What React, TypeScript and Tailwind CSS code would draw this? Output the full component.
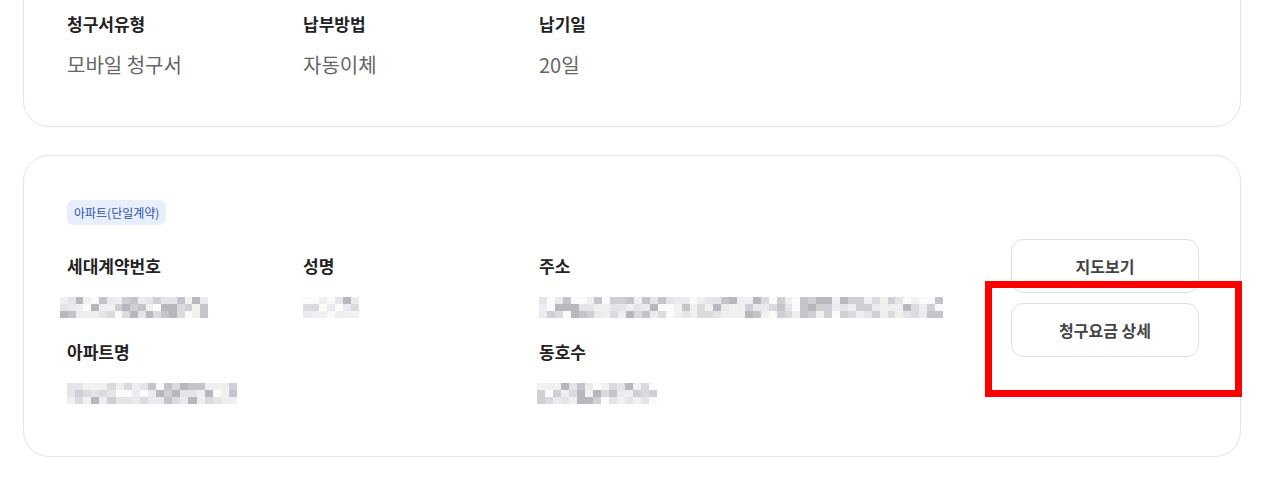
import React from "react";

type Field = {
  label: string;
  value?: string;
};

const shades = ["#efeff1", "#e4e5e8", "#dadbdf", "#cfd0d4", "#c3c5ca", "#e9ebef", "#b6b8bd", "#f3f1f0", "#fbfbfc"];

// pixelated placeholder for masked values
function Mosaic({ width, seed }: { width: number; seed: number }) {
  const cols = Math.round(width / 8);
  const rows = 3;
  const cells: string[] = [];
  for (let i = 0; i < cols * rows; i++) {
    const h = Math.abs(Math.sin((i + 1) * 12.9898 + seed * 78.233) * 43758.5453);
    const idx = Math.floor((h - Math.floor(h)) * shades.length);
    cells.push(shades[idx]);
  }
  return (
    <div
      className="grid h-[21px]"
      style={{ width, gridTemplateColumns: `repeat(${cols}, 1fr)` }}
    >
      {cells.map((c, i) => (
        <div key={i} style={{ backgroundColor: c }} />
      ))}
    </div>
  );
}

function Label({ children }: { children: React.ReactNode }) {
  return <div className="text-[17px] leading-[24px] font-bold text-[#222]">{children}</div>;
}

export default function App() {
  const billing: Field[] = [
    { label: "청구서유형", value: "모바일 청구서" },
    { label: "납부방법", value: "자동이체" },
    { label: "납기일", value: "20일" },
  ];

  return (
    <div
      className="relative min-h-[496px] overflow-hidden bg-white pl-[23px] pr-[30px]"
      style={{ fontFamily: '"Noto Sans CJK KR", "Noto Sans", sans-serif' }}
    >
      {/* billing card (top is cut off) */}
      <div className="-mt-[33px] rounded-[26px] border border-[#e3e5e8] pl-[43px] pr-[42px] pt-[44px] pb-[48px]">
        <div className="grid grid-cols-[236px_236px_1fr]">
          {billing.map((f) => (
            <div key={f.label}>
              <Label>{f.label}</Label>
              <div className="mt-[15px] text-[20px] leading-[27px] text-[#666]">{f.value}</div>
            </div>
          ))}
        </div>
      </div>

      {/* contract card */}
      <div className="mt-[28px] flex rounded-[26px] border border-[#e3e5e8] pl-[43px] pr-[41px] pt-[43px] pb-[52px]">
        <div className="flex-1">
          <span className="inline-block rounded-[6px] bg-[#e8effc] px-[7px] text-[12px] leading-[25px] text-[#2b4fa8]">
            아파트(단일계약)
          </span>
          <div className="mt-[29px] grid grid-cols-[236px_236px_1fr] gap-y-[22px]">
            <div>
              <Label>세대계약번호</Label>
              <div className="mt-[19px] -ml-[7px]">
                <Mosaic width={148} seed={11} />
              </div>
            </div>
            <div>
              <Label>성명</Label>
              <div className="mt-[19px]">
                <Mosaic width={56} seed={37} />
              </div>
            </div>
            <div>
              <Label>주소</Label>
              <div className="mt-[19px]">
                <Mosaic width={404} seed={73} />
              </div>
            </div>
            <div className="col-span-2">
              <Label>아파트명</Label>
              <div className="mt-[19px]">
                <Mosaic width={170} seed={5} />
              </div>
            </div>
            <div>
              <Label>동호수</Label>
              <div className="mt-[19px] -ml-[2px]">
                <Mosaic width={120} seed={91} />
              </div>
            </div>
          </div>
        </div>

        <div className="mt-[40px] flex w-[188px] flex-col gap-[10px]">
          <button className="h-[54px] rounded-[12px] border border-[#dcdfe4] bg-white text-[16px] font-bold text-[#444]">
            지도보기
          </button>
          <button className="h-[54px] rounded-[12px] border border-[#dcdfe4] bg-white text-[16px] font-bold text-[#444]">
            청구요금 상세
          </button>
        </div>
      </div>

      {/* annotation box */}
      <div className="absolute left-[985px] top-[281px] h-[116px] w-[257px] border-[7px] border-[#ff0000]" />
    </div>
  );
}
